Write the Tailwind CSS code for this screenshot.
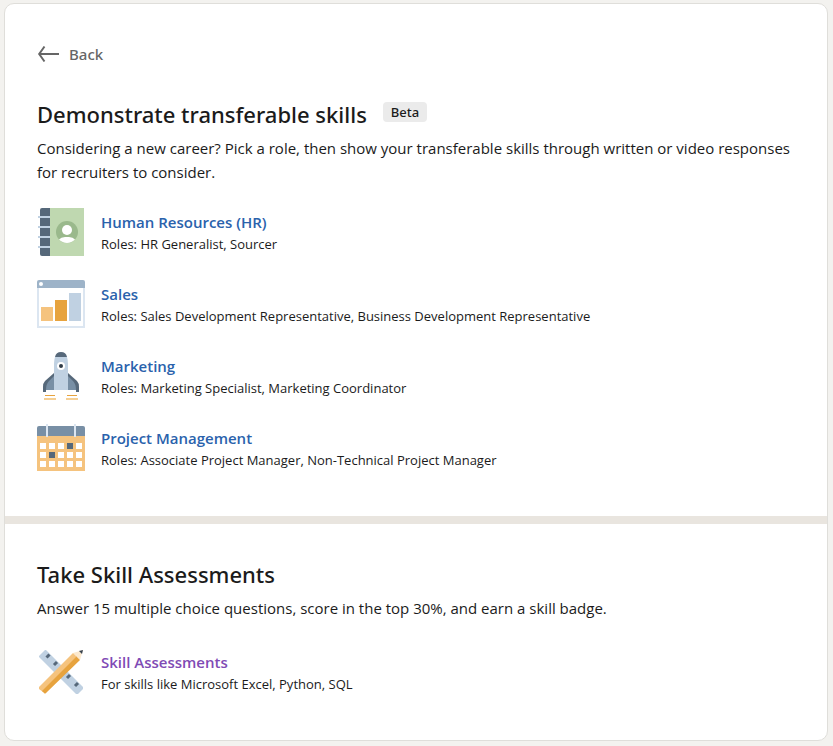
<!doctype html>
<html lang="en">

<head>
  <meta charset="utf-8">
  <meta name="viewport" content="width=device-width, initial-scale=1">
  <title>Demonstrate transferable skills</title>
  <script src="https://cdn.jsdelivr.net/npm/@tailwindcss/browser@4"></script>
</head>

<body class="bg-[#f3f2ef] pt-[3px] pb-1 pl-1 pr-[5px] font-['Open_Sans','Noto_Sans',sans-serif] text-[15px] text-[#1b1b1b]">
  <main class="bg-white border border-[#dfdeda] rounded-[10px] overflow-hidden">
    <section class="px-8 pt-[38px] pb-11">
      <a href="#" class="inline-flex items-center gap-2 h-6 align-top font-['Noto_Sans',sans-serif] font-medium text-[#666666]">
        <svg class="w-6 h-6" viewBox="0 0 24 24" fill="none" stroke="currentColor" stroke-width="2">
          <path d="M22 12H3M7.500 4.500L2.200 12L7.500 19.500" />
        </svg>
        Back
      </a>

      <div class="mt-8 flex items-center gap-4 font-['Noto_Sans',sans-serif] font-medium">
        <h1 class="text-[22px] leading-8">Demonstrate transferable skills</h1>
        <span class="mb-1 rounded bg-[#ebebeb] px-2 text-[13px] leading-5">Beta</span>
      </div>
      <p class="mt-1.5 leading-6">Considering a new career? Pick a role, then show your transferable skills through written or video responses for recruiters to consider.</p>

      <ul class="mt-6 flex flex-col gap-6">
        <li class="flex items-center gap-4">
          <svg class="w-12 h-12 shrink-0" viewBox="0 0 48 48">
            <path d="M5 0h8v48H5a2 2 0 0 1-2-2V2a2 2 0 0 1 2-2z" fill="#56687a" />
            <path d="M13 0h34v48H13z" fill="#bfd8b0" />
            <path d="M1 8h12v2H1zM1 18h12v2H1zM1 28h12v2H1zM1 38h12v2H1z" fill="#c0d1e2" />
            <circle cx="30" cy="24" r="11" fill="#9ab98c" />
            <circle cx="30" cy="22" r="5" fill="#fff" />
            <path d="M22 31.500q2-2.500 6-2.500h4q4 0 6 2.500a11 11 0 0 1-16 0z" fill="#fff" />
          </svg>
          <div>
            <h2 class="leading-6 font-semibold text-[#2a62ac]"><a href="#">Human Resources (HR)</a></h2>
            <p class="text-[13px] leading-5">Roles: HR Generalist, Sourcer</p>
          </div>
        </li>
        <li class="flex items-center gap-4">
          <svg class="w-12 h-12 shrink-0" viewBox="0 0 48 48">
            <path d="M0 8h48v40H0z" fill="#dce6f1" />
            <path d="M2 8h44v38H2z" fill="#fff" />
            <path d="M0 8V2a2 2 0 0 1 2-2h44a2 2 0 0 1 2 2v6z" fill="#9db3c8" />
            <circle cx="4" cy="4" r="2" fill="#fff" />
            <path d="M4 27h12v14H4z" fill="#f5c37e" />
            <path d="M18 20h12v21H18z" fill="#e7a33e" />
            <path d="M32 13h12v28H32z" fill="#c0d1e2" />
          </svg>
          <div>
            <h2 class="leading-6 font-semibold text-[#2a62ac]"><a href="#">Sales</a></h2>
            <p class="text-[13px] leading-5">Roles: Sales Development Representative, Business Development Representative</p>
          </div>
        </li>
        <li class="flex items-center gap-4">
          <svg class="w-12 h-12 shrink-0" viewBox="0 0 48 48">
            <path d="M17 21L8 29q-2 2-2 6v5h3v-2h8zM31 21l9 8q2 2 2 6v5h-3v-2h-8z" fill="#56687a" />
            <path d="M17 24l-5 5q-3 3-3 9h8zM31 24l5 5q3 3 3 9h-8z" fill="#788fa5" />
            <path d="M18 5h12q1 3 1 7v26H17V12q0-4 1-7z" fill="#c0d1e2" />
            <path d="M18 5q1-5 6-5t6 5z" fill="#56687a" />
            <circle cx="24" cy="14" r="4" fill="#fff" />
            <circle cx="24" cy="14" r="2" fill="#303c48" />
            <path d="M8 43h10v1H8zM30 43h10v1H30z" fill="#e7a33e" />
            <path d="M7 46h12v2H7zM29 46h12v2H29z" fill="#f5cf94" />
          </svg>
          <div>
            <h2 class="leading-6 font-semibold text-[#2a62ac]"><a href="#">Marketing</a></h2>
            <p class="text-[13px] leading-5">Roles: Marketing Specialist, Marketing Coordinator</p>
          </div>
        </li>
        <li class="flex items-center gap-4">
          <svg class="w-12 h-12 shrink-0" viewBox="0 0 48 48">
            <path d="M0 12h48v35H0z" fill="#f5c37e" />
            <path d="M0 12V4a2 2 0 0 1 2-2h44a2 2 0 0 1 2 2v8z" fill="#788fa5" />
            <path d="M9 0h2v13H9zM37 0h2v13h-2z" fill="#dce6f1" />
            <path d="M3 19h6v6H3zM12 19h6v6h-6zM21 19h6v6h-6zM39 19h6v6h-6zM3 28h6v6H3zM21 28h6v6h-6zM30 28h6v6h-6zM39 28h6v6h-6zM3 37h6v6H3zM12 37h6v6h-6zM21 37h6v6h-6zM30 37h6v6h-6zM39 37h6v6h-6z" fill="#fff" />
            <path d="M30 19h6v6h-6zM12 28h6v6h-6z" fill="#56687a" />
          </svg>
          <div>
            <h2 class="leading-6 font-semibold text-[#2a62ac]"><a href="#">Project Management</a></h2>
            <p class="text-[13px] leading-5">Roles: Associate Project Manager, Non-Technical Project Manager</p>
          </div>
        </li>
      </ul>
    </section>

    <section class="border-t-8 border-[#e9e5df] px-8 pt-[34px] pb-11">
      <h1 class="font-['Noto_Sans',sans-serif] text-[22px] leading-8 font-medium">Take Skill Assessments</h1>
      <p class="mt-1.5 leading-6">Answer 15 multiple choice questions, score in the top 30%, and earn a skill badge.</p>

      <div class="mt-7 flex items-center gap-4">
        <svg class="w-12 h-12 shrink-0" viewBox="0 0 48 48">
          <!-- ruler -->
          <path d="M9 2L46 39v2l-5 5h-2L2 9V8l6-6z" fill="#c0d1e2" />
          <path d="M9.500 9.500l3-3M17 17l3-3M30 30l3-3M38 38l3-3" stroke="#56687a" stroke-width="3" />
          <!-- pencil -->
          <path d="M46 2l-3 10L36 5z" fill="#fbe8cd" />
          <path d="M46 2l-1 4L42 3z" fill="#38434f" />
          <path d="M36 5l4 4L6 44l-4-3v-2z" fill="#f5c37e" />
          <path d="M39.500 8.500l3.500 3.500L9 45q-1 1-2 0l-2-2z" fill="#e7a33e" />
        </svg>
        <div>
          <h2 class="leading-6 font-semibold text-[#7f4bb5]"><a href="#">Skill Assessments</a></h2>
          <p class="text-[13px] leading-5">For skills like Microsoft Excel, Python, SQL</p>
        </div>
      </div>
    </section>
  </main>
</body>

</html>
